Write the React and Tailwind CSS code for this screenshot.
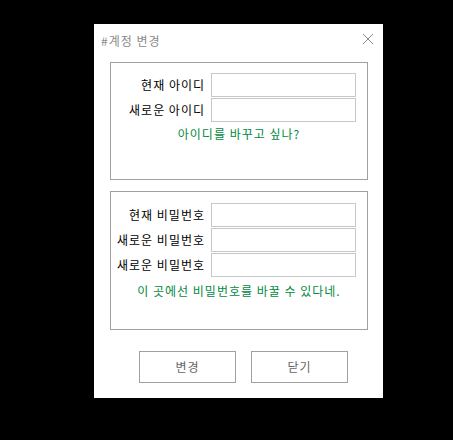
import React from "react";

const font = { fontFamily: '"Noto Sans CJK KR", "Noto Sans", sans-serif' };

const Field = ({ label }) => (
  <div className="flex items-center h-[24px]">
    <span className="w-[100px] pr-[6px] text-right text-[12px] tracking-[1px] text-black whitespace-nowrap leading-none">
      {label}
    </span>
    <input
      type="text"
      className="w-[145px] h-[24px] border border-[#c8c8c8] bg-white outline-none"
    />
  </div>
);

const GroupBox = ({ fields, hint, className }) => (
  <div className={`border border-[#a0a0a0] ${className}`}>
    <div className="flex flex-col gap-[1px]">
      {fields.map((f, i) => (
        <Field key={i} label={f} />
      ))}
    </div>
    <p className="text-center text-[12px] tracking-[1px] leading-[16px] text-[#008a3e]">{hint}</p>
  </div>
);

export default function App() {
  return (
    <div className="w-[453px] h-[440px] bg-black pl-[94px] pt-[24px]" style={font}>
      <div className="w-[289px] h-[374px] bg-white flex flex-col">
        {/* title bar */}
        <div className="h-[38px] flex items-center justify-between pl-[7px] pr-[9px] pb-[4px]">
          <span className="text-[12px] tracking-[1px] text-[#8a8a8a]">#계정 변경</span>
          <svg width="12" height="12" viewBox="0 0 12 12" className="mt-[-4px]">
            <path d="M1 1L11 11M11 1L1 11" stroke="#8a8a8a" strokeWidth="1" />
          </svg>
        </div>

        <div className="pl-[16px]">
          <GroupBox
            className="w-[258px] h-[118px] pt-[10px] [&>p]:mt-[4px]"
            fields={["현재 아이디", "새로운 아이디"]}
            hint="아이디를 바꾸고 싶나?"
          />
          <GroupBox
            className="w-[258px] h-[139px] mt-[11px] pt-[11px] [&>p]:mt-[6px]"
            fields={["현재 비밀번호", "새로운 비밀번호", "새로운 비밀번호"]}
            hint="이 곳에선 비밀번호를 바꿀 수 있다네."
          />
        </div>

        <div className="flex gap-[15px] pl-[45px] mt-[21px]">
          <button className="w-[97px] h-[32px] border border-[#a0a0a0] bg-white text-[12px] tracking-[1px] text-[#666]">
            변경
          </button>
          <button className="w-[97px] h-[32px] border border-[#a0a0a0] bg-white text-[12px] tracking-[1px] text-[#666]">
            닫기
          </button>
        </div>
      </div>
    </div>
  );
}
